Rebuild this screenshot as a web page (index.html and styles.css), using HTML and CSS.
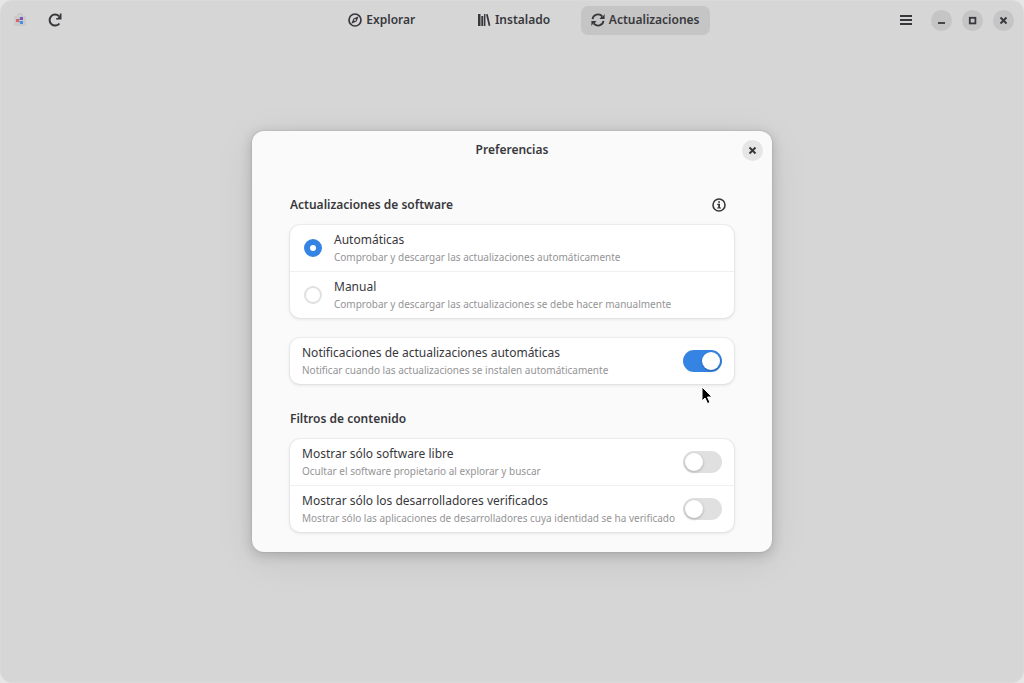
FILE: index.html
```
<!DOCTYPE html>
<html lang="es">
<head>
<meta charset="utf-8">
<title>Software</title>
<link rel="stylesheet" href="styles.css">
</head>
<body>
<div class="window">
  <header class="topbar">
    <div class="side">
      <svg class="app-logo" width="14" height="14" viewBox="0 0 14 14" aria-hidden="true">
        <rect x="1" y="3" width="12" height="10" rx="1" fill="#cbcbcc"/>
        <path d="M5 3V1h4v2" fill="none" stroke="#c0c0c2"/>
        <rect x="3" y="6" width="3" height="3" fill="#dc6464"/>
        <rect x="7" y="4" width="3" height="3" fill="#7957b8"/>
        <rect x="7" y="8" width="3" height="3" fill="#4b91df"/>
        <path d="M5 7l2-1M5 8l2 1" stroke="#a06fae"/>
      </svg>
      <button class="icon-btn" type="button" aria-label="Recargar">
        <svg width="16" height="16" viewBox="0 0 16 16"><path d="M12.4 11.500A5.500 5.500 0 1 1 12 4.200" fill="none" stroke="currentColor" stroke-width="2"/><path d="M14.500 1.500V7.500H9V6.200l1.600-.2 2-2.200.3-2.300z" fill="currentColor"/></svg>
      </button>
    </div>
    <nav class="tabs">
      <button class="tab" type="button">
        <svg width="14" height="14" viewBox="0 0 14 14"><circle cx="7" cy="7" r="6" fill="none" stroke="currentColor" stroke-width="1.7"/><path d="M10.700 3.300L8.500 8.500 3.300 10.700 5.500 5.500z" fill="currentColor"/><circle cx="7" cy="7" r="1" fill="#d6d6d7"/></svg>
        Explorar
      </button>
      <button class="tab" type="button">
        <svg width="14" height="14" viewBox="0 0 14 14"><path d="M1 1h2.500v12H1zM4.300 3h2v10h-2zM7 1h1.400v12H7zM9 1.400l1.700-.4 2.700 11.600-1.700.4z" fill="currentColor"/></svg>
        Instalado
      </button>
      <button class="tab tab-active" type="button">
        <svg width="14" height="14" viewBox="0 0 14 14"><path d="M1.500 6.200A5.600 5.600 0 0 1 11.400 3.600M12.500 7.800A5.600 5.600 0 0 1 2.600 10.400" fill="none" stroke="currentColor" stroke-width="1.8"/><path d="M13.600 1v5H8.500l1.800-2.200 1.600-.3zM.4 13V8h5.100l-1.800 2.200-1.600.3z" fill="currentColor"/></svg>
        Actualizaciones
      </button>
    </nav>
    <div class="side side-end">
      <button class="icon-btn" type="button" aria-label="Menú">
        <svg width="14" height="14" viewBox="0 0 14 14"><path d="M1 3h12M1 7h12M1 11h12" stroke="currentColor" stroke-width="2"/></svg>
      </button>
      <button class="round" type="button" aria-label="Minimizar">
        <svg width="9" height="9" viewBox="0 0 9 9"><path d="M1 7h7" stroke="currentColor" stroke-width="1.8"/></svg>
      </button>
      <button class="round" type="button" aria-label="Maximizar">
        <svg width="9" height="9" viewBox="0 0 9 9"><rect x="1.800" y="1.800" width="5.600" height="5.600" fill="none" stroke="currentColor" stroke-width="1.8"/></svg>
      </button>
      <button class="round" type="button" aria-label="Cerrar">
        <svg width="9" height="9" viewBox="0 0 9 9"><path d="M1.500 1.500l6 6M7.500 1.500l-6 6" stroke="currentColor" stroke-width="1.9"/></svg>
      </button>
    </div>
  </header>
  <main class="stage">
    <section class="dialog" role="dialog" aria-labelledby="dialog-title">
      <header class="dialog-head">
        <h1 class="dialog-title" id="dialog-title">Preferencias</h1>
        <button class="round dialog-close" type="button" aria-label="Cerrar">
          <svg width="9" height="9" viewBox="0 0 9 9"><path d="M1.500 1.500l6 6M7.500 1.500l-6 6" stroke="currentColor" stroke-width="1.9"/></svg>
        </button>
      </header>
      <div class="dialog-body">
        <div class="group-head">
          <h2 class="group-title">Actualizaciones de software</h2>
          <button class="icon-btn info" type="button" aria-label="Información">
            <svg width="14" height="14" viewBox="0 0 14 14"><circle cx="7" cy="7" r="6" fill="none" stroke="currentColor" stroke-width="1.6"/><path d="M6.200 3.200h1.800v1.600H6.200zM5.200 5.800H8v3.600h1v1.200H5.200V9.400h1V7h-1z" fill="currentColor"/></svg>
          </button>
        </div>
        <div class="card">
          <label class="row row-radio">
            <input class="radio" type="radio" name="mode" checked>
            <span class="text"><span class="name">Automáticas</span><span class="desc">Comprobar y descargar las actualizaciones automáticamente</span></span>
          </label>
          <label class="row row-radio">
            <input class="radio" type="radio" name="mode">
            <span class="text"><span class="name">Manual</span><span class="desc">Comprobar y descargar las actualizaciones se debe hacer manualmente</span></span>
          </label>
        </div>
        <div class="card card-spaced">
          <label class="row">
            <span class="text"><span class="name">Notificaciones de actualizaciones automáticas</span><span class="desc">Notificar cuando las actualizaciones se instalen automáticamente</span></span>
            <input class="switch" type="checkbox" role="switch" checked>
          </label>
        </div>
        <div class="group-head group-head-later">
          <h2 class="group-title">Filtros de contenido</h2>
        </div>
        <div class="card">
          <label class="row">
            <span class="text"><span class="name">Mostrar sólo software libre</span><span class="desc">Ocultar el software propietario al explorar y buscar</span></span>
            <input class="switch" type="checkbox" role="switch">
          </label>
          <label class="row">
            <span class="text"><span class="name">Mostrar sólo los desarrolladores verificados</span><span class="desc">Mostrar sólo las aplicaciones de desarrolladores cuya identidad se ha verificado</span></span>
            <input class="switch" type="checkbox" role="switch">
          </label>
        </div>
      </div>
      <svg class="pointer" width="12" height="19" viewBox="0 0 12 19" aria-hidden="true"><path d="M1 1v14l3-3 2.500 5.500 2.500-1L6.500 11H11z" fill="#000" stroke="#fff" stroke-width="1"/></svg>
    </section>
  </main>
</div>
</body>
</html>
```
FILE: styles.css
```
* { box-sizing: border-box; }
body {
  margin: 0;
  background: #e6e6e7;
  color: #38383c;
  font: 12px/18px "Noto Sans", sans-serif;
}
button {
  border: 0;
  padding: 0;
  background: none;
  color: inherit;
  font: inherit;
}
svg { display: block; flex: none; }
.window {
  min-height: 100vh;
  display: flex;
  flex-direction: column;
  background: #d6d6d7;
  border: 1px solid #dadadb;
  border-radius: 12px;
}
.topbar {
  display: grid;
  grid-template-columns: 1fr auto 1fr;
  align-items: center;
  height: 38px;
  padding: 0 9px 0 12px;
}
.side { display: flex; align-items: center; gap: 20px; }
.side-end { justify-content: flex-end; gap: 10px; }
.side-end .icon-btn { margin-right: 8px; }
.icon-btn { display: grid; place-items: center; min-height: 28px; }
.tabs { display: grid; grid-template-columns: repeat(3, 1fr); gap: 3px; }
.tab {
  display: flex;
  align-items: center;
  justify-content: center;
  gap: 4px;
  height: 29px;
  padding: 0 10px;
  border-radius: 7px;
  font-weight: 600;
}
.tab-active { background: #c5c5c6; }
.round {
  display: grid;
  place-items: center;
  width: 21px;
  height: 21px;
  border-radius: 50%;
  background: #c5c5c6;
}
.stage {
  flex: 1;
  display: flex;
  justify-content: center;
  align-items: flex-start;
  padding: 92px 20px 40px;
}
.dialog {
  position: relative;
  width: 100%;
  max-width: 520px;
  padding-bottom: 20px;
  border-radius: 12px;
  background: #fafafa;
  box-shadow: 0 0 1px 1px rgba(0, 0, 0, .05), 0 3px 12px 1px rgba(0, 0, 0, .16), 0 8px 40px rgba(0, 0, 0, .08);
}
.dialog-head {
  display: grid;
  grid-template-columns: 1fr auto 1fr;
  align-items: center;
  height: 38px;
  padding: 0 9px;
}
.dialog-title { grid-column: 2; margin: 0; font-size: 12px; font-weight: 600; }
.dialog-close { justify-self: end; background: #e6e6e6; }
.dialog-body { padding: 22px 38px 0; }
.group-head {
  display: flex;
  align-items: center;
  justify-content: space-between;
  height: 28px;
  margin-bottom: 6px;
}
.group-head-later { margin: 21px 0 6px; }
.group-title { margin: 0; font-size: 12px; font-weight: 600; }
.info { width: 30px; }
.card {
  border-radius: 10px;
  background: #fff;
  box-shadow: 0 0 0 1px rgba(0, 0, 0, .03), 0 1px 3px 1px rgba(0, 0, 0, .07);
}
.card-spaced { margin-top: 20px; }
.row {
  display: flex;
  align-items: center;
  gap: 4px;
  min-height: 46px;
  padding: 6px 12px;
}
.row + .row { border-top: 1px solid #f0f0f0; }
.row-radio { gap: 12px; padding-left: 14px; }
.text { flex: 1; display: flex; flex-direction: column; }
.name { line-height: 18px; }
.desc { font-size: 10px; line-height: 16px; color: #949496; }
.radio {
  appearance: none;
  flex: none;
  width: 18px;
  height: 18px;
  margin: 0;
  border: 2px solid #e0e0e0;
  border-radius: 50%;
  background: #fff;
}
.radio:checked { border: 6px solid #3584e4; }
.switch {
  appearance: none;
  flex: none;
  display: flex;
  width: 39px;
  height: 22px;
  margin: 0;
  padding: 2px;
  border-radius: 11px;
  background: #e0e0e0;
}
.switch::before {
  content: "";
  width: 18px;
  height: 18px;
  border-radius: 50%;
  background: #fff;
  box-shadow: 0 1px 3px rgba(0, 0, 0, .25);
}
.switch:checked { justify-content: flex-end; background: #3584e4; }
.pointer { position: absolute; left: 449px; top: 255px; }
```
